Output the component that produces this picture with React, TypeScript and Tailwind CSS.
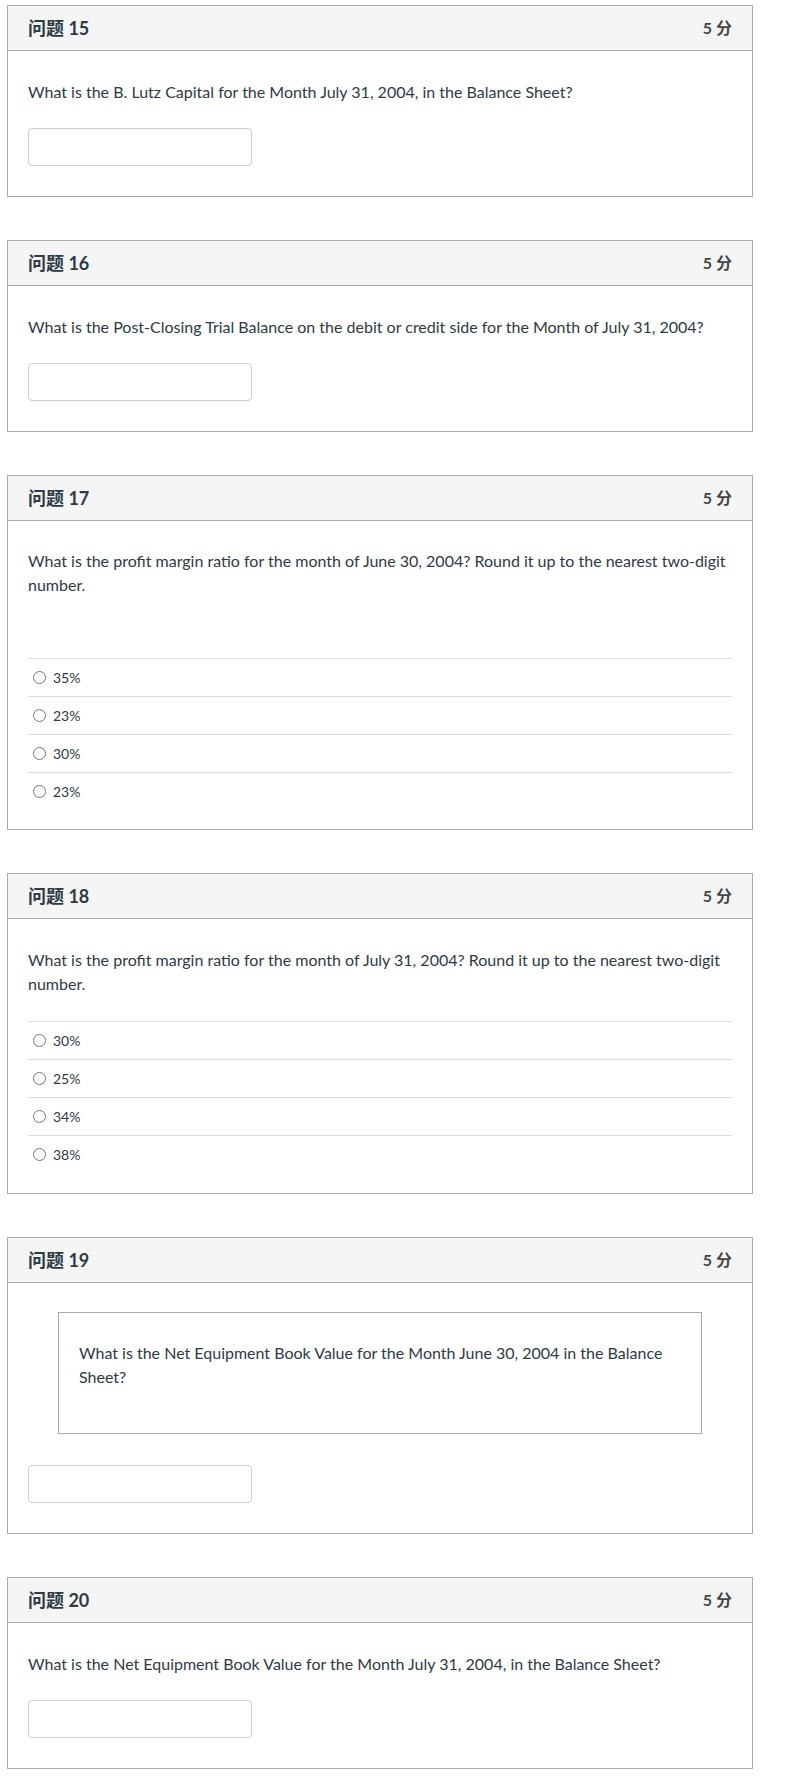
import React from "react";

const font = { fontFamily: 'Lato, "Noto Sans CJK SC", "Noto Sans", sans-serif' };

function Header({ n }: { n: number }) {
  return (
    <div className="flex h-[45px] items-center justify-between border-b border-[#aaaaaa] bg-[#f5f5f5] px-[20px]">
      <div className="text-[18px] font-bold text-[#2d3b45]">问题 {n}</div>
      <div className="text-[16px] font-bold text-[#444444]">5 分</div>
    </div>
  );
}

function Card({ n, children, first }: { n: number; children: React.ReactNode; first?: boolean }) {
  return (
    <div
      className={
        "ml-[7px] w-[746px] border border-[#aaaaaa] bg-white " + (first ? "mt-[5px]" : "mt-[43px]")
      }
    >
      <Header n={n} />
      {children}
    </div>
  );
}

function Input() {
  return <div className="h-[38px] w-[224px] rounded-[4px] border border-[#cccccc] bg-white" />;
}

function Options({ items, top }: { items: string[]; top: string }) {
  return (
    <div className={top}>
      {items.map((t, i) => (
        <div key={i} className="flex h-[38px] items-center border-t border-[#dddddd] pl-[5px]">
          <span className="box-border inline-block h-[13px] w-[13px] rounded-full border border-[#767676] bg-white" />
          <span className="ml-[7px] text-[14px] text-[#2d3b45]">{t}</span>
        </div>
      ))}
    </div>
  );
}

export default function App() {
  return (
    <div className="min-h-[1781px] bg-white pb-[12px] text-[#2d3b45]" style={font}>
      <Card n={15} first>
        <div className="px-[20px] pb-[30px] pt-[29px]">
          <p className="text-[16px] leading-[24px]">
            What is the B. Lutz Capital for the Month July 31, 2004, in the Balance Sheet?
          </p>
          <div className="mt-[24px]">
            <Input />
          </div>
        </div>
      </Card>

      <Card n={16}>
        <div className="px-[20px] pb-[30px] pt-[29px]">
          <p className="text-[16px] leading-[24px]">
            What is the Post-Closing Trial Balance on the debit or credit side for the Month of July 31, 2004?
          </p>
          <div className="mt-[24px]">
            <Input />
          </div>
        </div>
      </Card>

      <Card n={17}>
        <div className="px-[20px] pb-[19px] pt-[28px]">
          <p className="text-[16px] leading-[24px]">
            What is the profit margin ratio for the month of June 30, 2004? Round it up to the nearest two-digit
            number.
          </p>
          <Options items={["35%", "23%", "30%", "23%"]} top="mt-[61px]" />
        </div>
      </Card>

      <Card n={18}>
        <div className="px-[20px] pb-[20px] pt-[29px]">
          <p className="text-[16px] leading-[24px]">
            What is the profit margin ratio for the month of July 31, 2004? Round it up to the nearest two-digit
            number.
          </p>
          <Options items={["30%", "25%", "34%", "38%"]} top="mt-[25px]" />
        </div>
      </Card>

      <Card n={19}>
        <div className="px-[20px] pb-[30px] pt-[29px]">
          <div className="mx-[30px] border border-[#aaaaaa] pb-[44px] pl-[20px] pr-[20px] pt-[28px]">
            <p className="text-[16px] leading-[24px]">
              What is the Net Equipment Book Value for the Month June 30, 2004 in the Balance Sheet?
            </p>
          </div>
          <div className="mt-[31px]">
            <Input />
          </div>
        </div>
      </Card>

      <Card n={20}>
        <div className="px-[20px] pb-[30px] pt-[29px]">
          <p className="text-[16px] leading-[24px]">
            What is the Net Equipment Book Value for the Month July 31, 2004, in the Balance Sheet?
          </p>
          <div className="mt-[24px]">
            <Input />
          </div>
        </div>
      </Card>
    </div>
  );
}
